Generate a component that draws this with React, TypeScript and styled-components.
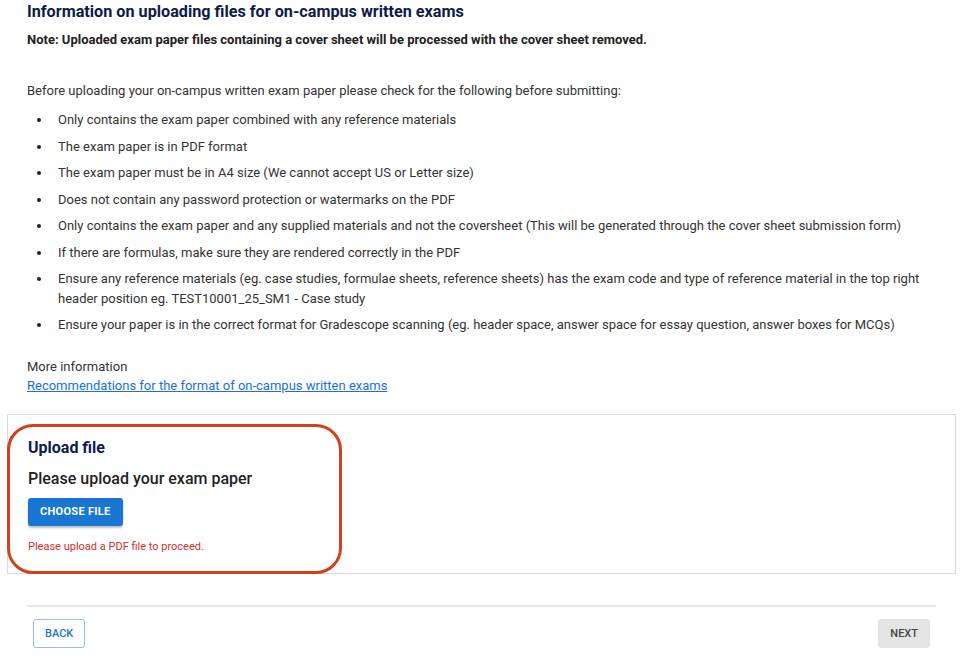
import styled, { createGlobalStyle } from "styled-components";

const GlobalStyle = createGlobalStyle`
  html, body {
    margin: 0;
    padding: 0;
    background: #ffffff;
  }
  body {
    font-family: Roboto, "Liberation Sans", Arial, sans-serif;
    color: #333333;
  }
`;

const bullets: string[] = [
  "Only contains the exam paper combined with any reference materials",
  "The exam paper is in PDF format",
  "The exam paper must be in A4 size (We cannot accept US or Letter size)",
  "Does not contain any password protection or watermarks on the PDF",
  "Only contains the exam paper and any supplied materials and not the coversheet (This will be generated through the cover sheet submission form)",
  "If there are formulas, make sure they are rendered correctly in the PDF",
  "Ensure any reference materials (eg. case studies, formulae sheets, reference sheets) has the exam code and type of reference material in the top right header position eg. TEST10001_25_SM1 - Case study",
  "Ensure your paper is in the correct format for Gradescope scanning (eg. header space, answer space for essay question, answer boxes for MCQs)",
];

const App = () => {
  return (
    <Page>
      <GlobalStyle />
      <Info>
        <Title>Information on uploading files for on-campus written exams</Title>
        <Note>Note: Uploaded exam paper files containing a cover sheet will be processed with the cover sheet removed.</Note>
        <Intro>Before uploading your on-campus written exam paper please check for the following before submitting:</Intro>
        <List>
          {bullets.map((b) => (
            <Item key={b}>{b}</Item>
          ))}
        </List>
        <MoreInfo>
          <span>More information</span>
          <Link href="#">Recommendations for the format of on-campus written exams</Link>
        </MoreInfo>
      </Info>

      <UploadCard>
        <Highlight />
        <CardTitle>Upload file</CardTitle>
        <Prompt>Please upload your exam paper</Prompt>
        <ChooseButton type="button">Choose file</ChooseButton>
        <ErrorText>Please upload a PDF file to proceed.</ErrorText>
      </UploadCard>

      <Footer>
        <NavButton type="button" $variant="outline">Back</NavButton>
        <NavButton type="button" $variant="disabled">Next</NavButton>
      </Footer>
    </Page>
  );
};

export default App;

const Page = styled.div`
  width: 965px;
  height: 659px;
  padding: 0 9px 0 7px;
  box-sizing: border-box;
  overflow: hidden;
`;

const Info = styled.div`
  padding: 2px 20px 0;
`;

const Title = styled.h2`
  margin: 0;
  font-size: 16.2px;
  line-height: 20px;
  font-weight: 700;
  color: #0d1b4c;
`;

const Note = styled.p`
  margin: 10px 0 0;
  font-size: 13px;
  line-height: 16px;
  font-weight: 700;
  color: #222;
`;

const Intro = styled.p`
  margin: 35px 0 0;
  font-size: 13px;
  line-height: 16px;
  color: #333;
`;

const List = styled.ul`
  margin: 11px 0 0;
  padding: 0 0 0 31px;
  list-style: none;
`;

const Item = styled.li`
  position: relative;
  font-size: 13px;
  line-height: 19.5px;
  color: #333;
  margin-bottom: 7px;

  /* bullet dot sits well to the left of the text */
  &::before {
    content: "";
    position: absolute;
    left: -21px;
    top: 8px;
    width: 4px;
    height: 4px;
    border-radius: 50%;
    background: #222;
  }
`;

const MoreInfo = styled.div`
  margin-top: 22px;
  display: flex;
  flex-direction: column;
  font-size: 13px;
  line-height: 19px;
  color: #333;
`;

const Link = styled.a`
  color: #1a6fe6;
  text-decoration: underline;
  width: fit-content;
`;

const UploadCard = styled.section`
  position: relative;
  margin-top: 19px;
  border: 1px solid #dcdcdc;
  padding: 24px 20px 19px;
  display: flex;
  flex-direction: column;
  align-items: flex-start;
`;

/* annotation ring drawn over the card */
const Highlight = styled.div`
  position: absolute;
  left: -1px;
  top: 9px;
  width: 335px;
  height: 150px;
  box-sizing: border-box;
  border: 3px solid #d2401c;
  border-radius: 26px;
  pointer-events: none;
`;

const CardTitle = styled.h3`
  margin: 0;
  font-size: 16px;
  line-height: 18px;
  font-weight: 700;
  color: #0d1b4c;
`;

const Prompt = styled.p`
  margin: 12px 0 0;
  font-size: 16px;
  line-height: 20px;
  font-weight: 500;
  color: #222;
`;

const ChooseButton = styled.button`
  margin-top: 9px;
  height: 28px;
  padding: 0 12px;
  border: none;
  border-radius: 3px;
  background: #1976d2;
  color: #fff;
  font-family: Roboto, "Liberation Sans", Arial, sans-serif;
  font-size: 11px;
  font-weight: 700;
  letter-spacing: 0.3px;
  text-transform: uppercase;
  box-shadow: 0 2px 2px rgba(0, 0, 0, 0.25);
`;

const ErrorText = styled.p`
  margin: 14px 0 0;
  font-size: 11px;
  line-height: 14px;
  color: #d32f2f;
`;

const Footer = styled.div`
  margin: 31px 20px 0;
  border-top: 2px solid #e6e6e6;
  padding: 12px 6px 0;
  display: flex;
  justify-content: space-between;
`;

const NavButton = styled.button<{ $variant: "outline" | "disabled" }>`
  height: 29px;
  padding: 0 11px;
  border-radius: 3px;
  font-family: Roboto, "Liberation Sans", Arial, sans-serif;
  font-size: 11px;
  font-weight: 500;
  text-transform: uppercase;
  border: 1px solid ${(p) => (p.$variant === "outline" ? "#90bff0" : "#e4e4e4")};
  background: ${(p) => (p.$variant === "outline" ? "#ffffff" : "#e4e4e4")};
  color: ${(p) => (p.$variant === "outline" ? "#1976d2" : "#444")};
`;
